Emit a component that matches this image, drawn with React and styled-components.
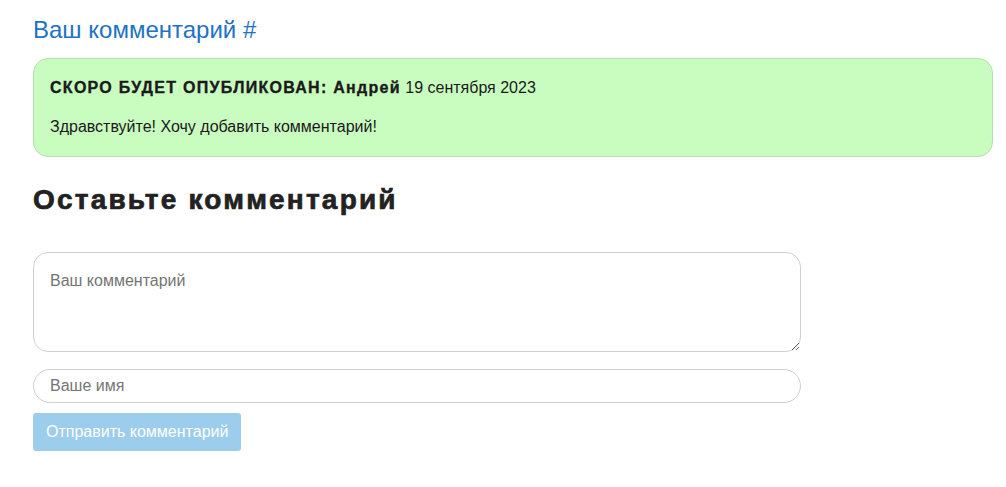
import React from "react";
import styled, { createGlobalStyle } from "styled-components";

const Global = createGlobalStyle`
  body {
    margin: 0;
    background: #fff;
    font-family: "Liberation Sans", Arial, sans-serif;
    color: #222;
  }
`;

export default function App() {
  return (
    <>
      <Global />
      <Page>
        <SectionTitle>Ваш комментарий #</SectionTitle>
        <Pending>
          <PendingHead>
            <b>СКОРО БУДЕТ ОПУБЛИКОВАН: Андрей</b> 19 сентября 2023
          </PendingHead>
          <PendingText>Здравствуйте! Хочу добавить комментарий!</PendingText>
        </Pending>
        <FormTitle>Оставьте комментарий</FormTitle>
        <Form>
          <TextArea placeholder="Ваш комментарий" />
          <Input placeholder="Ваше имя" />
          <Submit type="button">Отправить комментарий</Submit>
        </Form>
      </Page>
    </>
  );
}

const Page = styled.div`
  padding: 16px 13px 0 33px;
`;

const SectionTitle = styled.h3`
  margin: 0 0 14px;
  font-size: 24px;
  font-weight: 400;
  color: #1e72c4;
  line-height: 28px;
`;

const Pending = styled.div`
  background: #c9fdc0;
  border: 1px solid #b5dcae;
  border-radius: 15px;
  padding: 19px 16px 19px;
  font-size: 16px;
  color: #1a1a1a;
`;

const PendingHead = styled.div`
  line-height: 20px;
  b {
    letter-spacing: 1.28px;
    -webkit-text-stroke: 0.35px #1a1a1a;
  }
`;

const PendingText = styled.div`
  margin-top: 19px;
  line-height: 20px;
`;

const FormTitle = styled.h2`
  margin: 27px 0 36px;
  font-size: 28px;
  line-height: 32px;
  font-weight: 700;
  letter-spacing: 2.2px;
  -webkit-text-stroke: 0.7px #222;
  color: #222;
`;

const Form = styled.div`
  display: flex;
  flex-direction: column;
  align-items: flex-start;
  width: 768px;
`;

const field = `
  box-sizing: border-box;
  width: 100%;
  border: 1px solid #cfcfcf;
  background: #fff;
  font-family: "Liberation Sans", Arial, sans-serif;
  font-size: 16px;
  color: #333;
  outline: none;
  &::placeholder {
    color: #757575;
  }
`;

const TextArea = styled.textarea`
  ${field}
  height: 100px;
  border-radius: 15px;
  padding: 19px 16px;
  resize: vertical;
  margin: 0;
  display: block;
`;

const Input = styled.input`
  ${field}
  height: 34px;
  border-radius: 17px;
  padding: 0 16px;
  margin: 17px 0 0;
`;

const Submit = styled.button`
  margin-top: 10px;
  height: 38px;
  padding: 0 13px;
  border: none;
  border-radius: 3px;
  background: #9ccdec;
  color: #fff;
  font-family: "Liberation Sans", Arial, sans-serif;
  font-size: 16px;
  cursor: pointer;
`;
